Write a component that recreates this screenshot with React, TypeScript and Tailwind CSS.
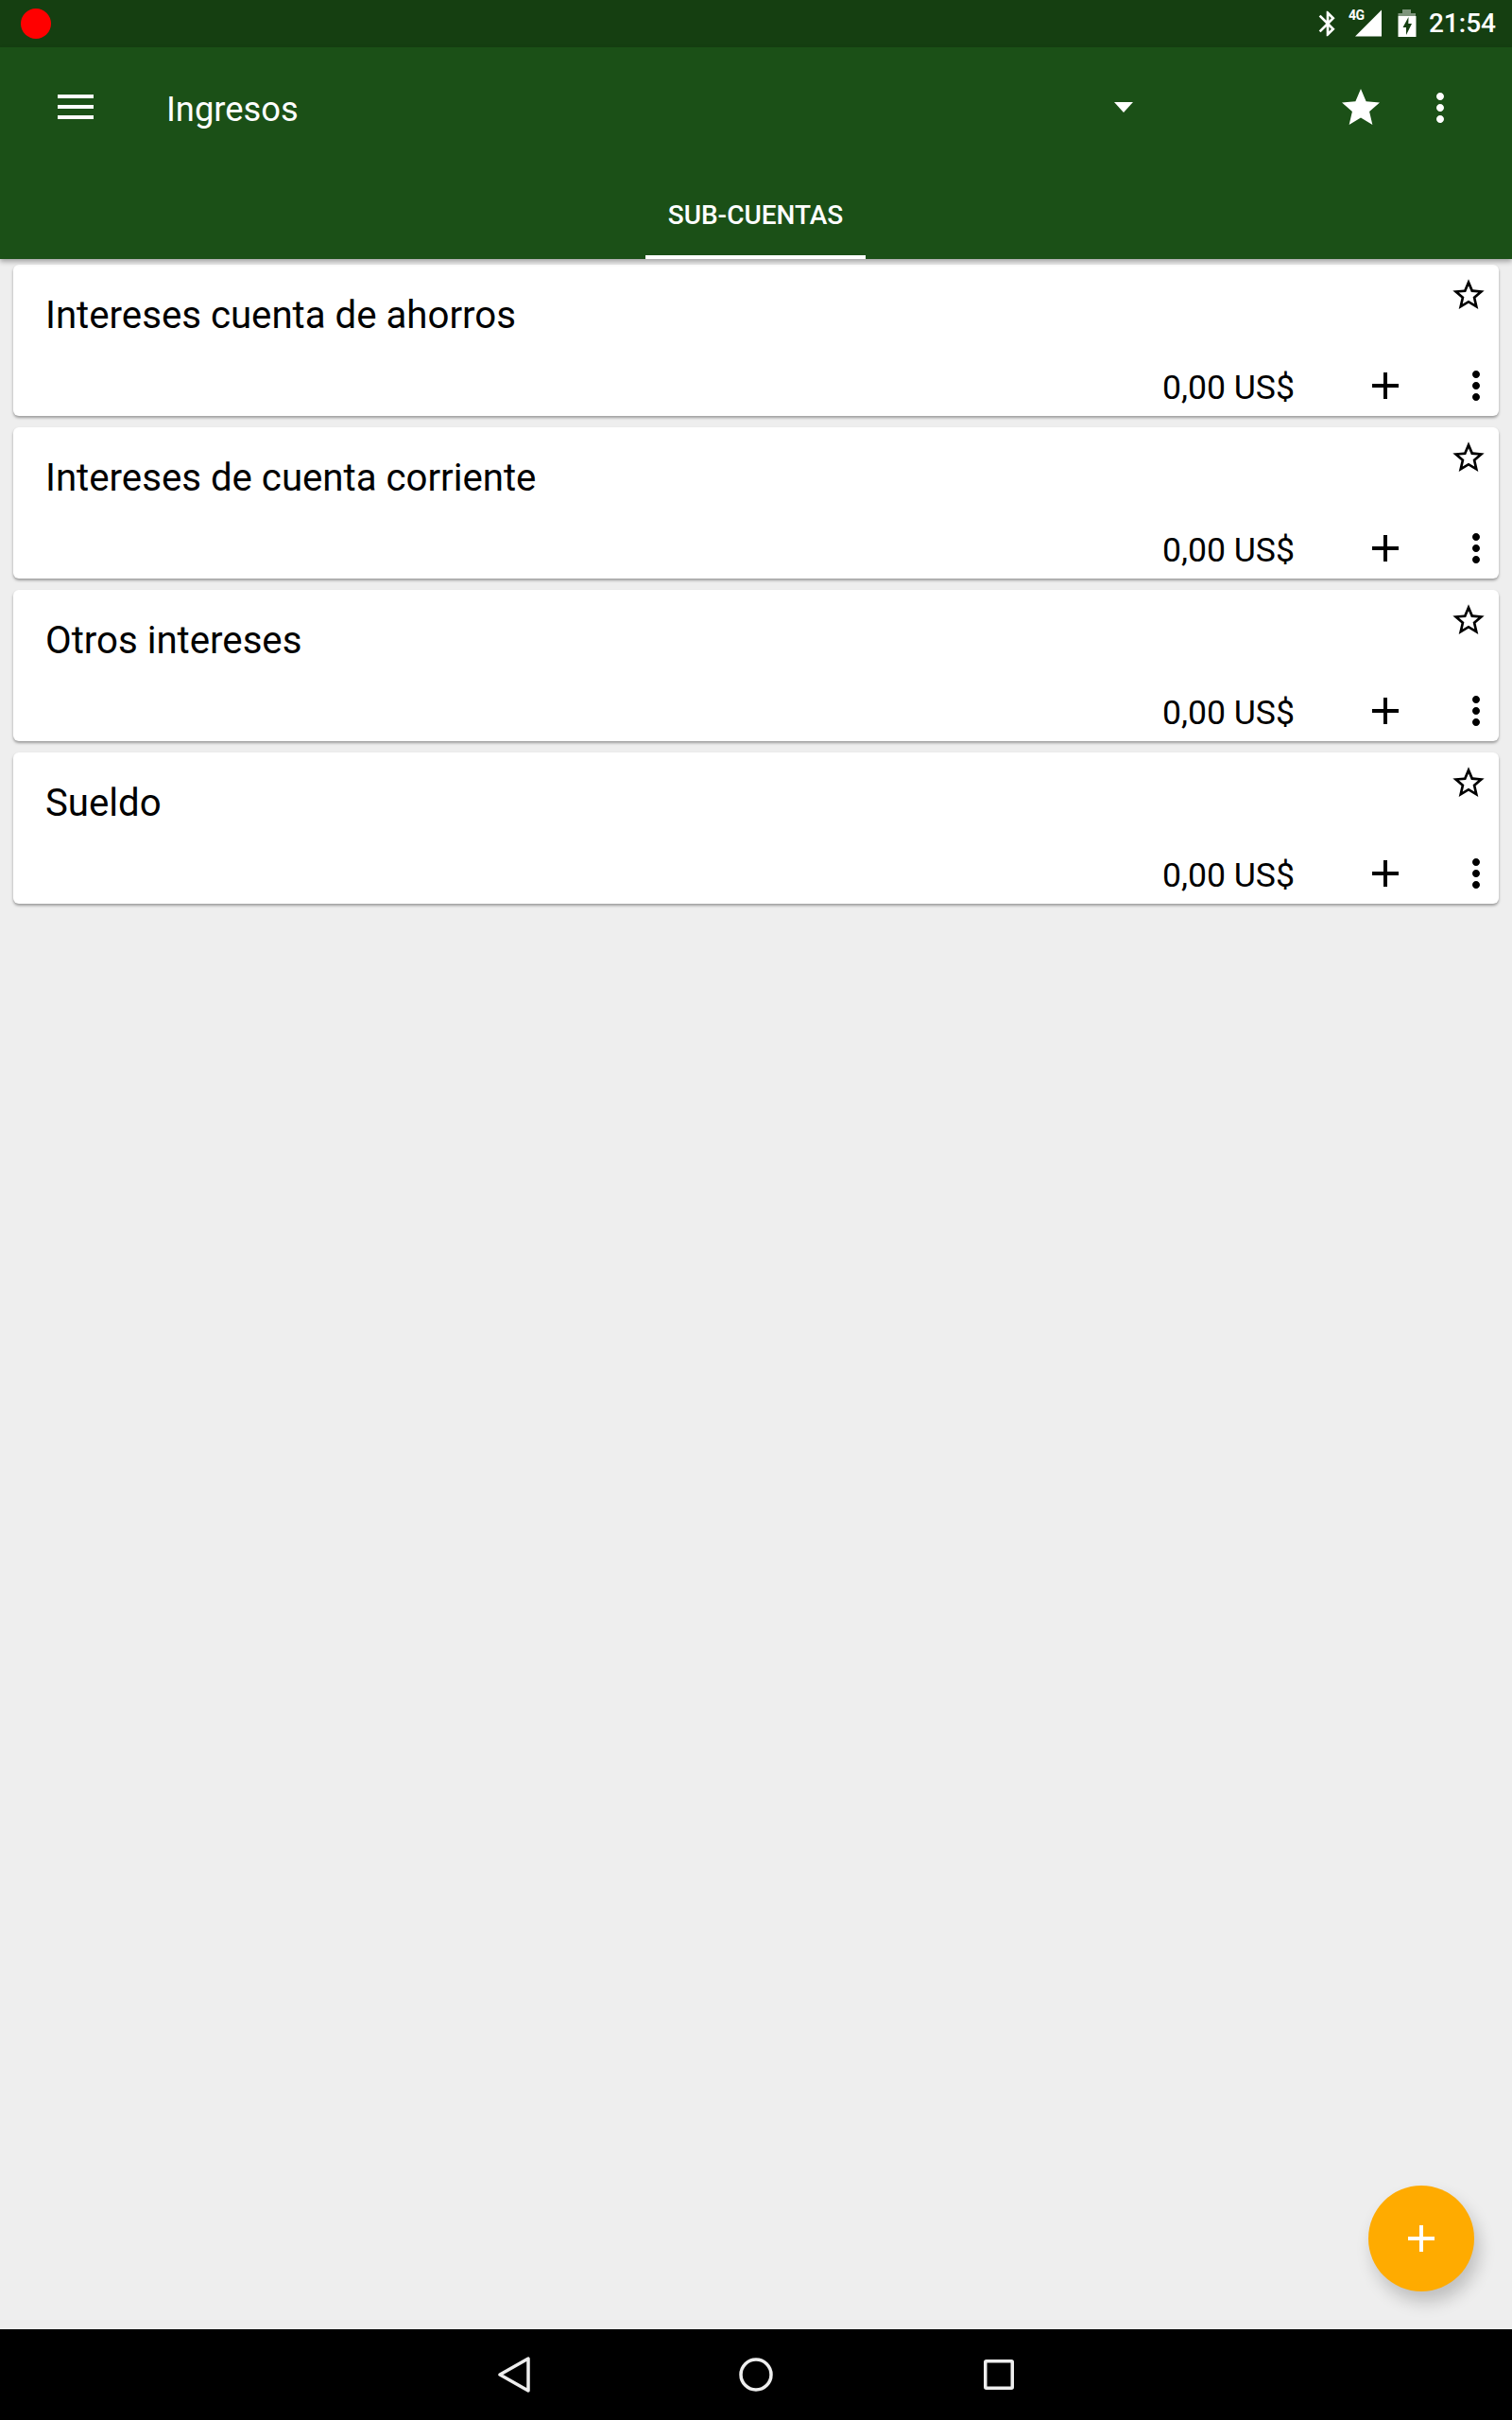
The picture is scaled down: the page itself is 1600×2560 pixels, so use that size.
import React from 'react';

const accounts = ['Intereses cuenta de ahorros', 'Intereses de cuenta corriente', 'Otros intereses', 'Sueldo'];

const MORE = 'M12 8c1.1 0 2-.9 2-2s-.9-2-2-2-2 .9-2 2 .9 2 2 2zm0 2c-1.1 0-2 .9-2 2s.9 2 2 2 2-.9 2-2-.9-2-2-2zm0 6c-1.1 0-2 .9-2 2s.9 2 2 2 2-.9 2-2-.9-2-2-2z';
const PLUS = 'M19 13h-6v6h-2v-6H5v-2h6V5h2v6h6v2z';
const STAR = 'M12 17.27L18.18 21l-1.64-7.03L22 9.24l-7.19-.61L12 2 9.19 8.63 2 9.24l5.46 4.73L5.82 21z';
const STAR_BORDER = 'M22 9.24l-7.19-.62L12 2 9.19 8.63 2 9.24l5.46 4.73L5.82 21 12 17.27 18.18 21l-1.63-7.03L22 9.24zM12 15.4l-3.76 2.27 1-4.28-3.32-2.88 4.38-.38L12 6.1l1.71 4.04 4.38.38-3.32 2.88 1 4.28L12 15.4z';
const BLUETOOTH = 'M17.71 7.71L12 2h-1v7.59L6.41 5 5 6.41 10.59 12 5 17.59 6.41 19 11 14.41V22h1l5.71-5.71-4.3-4.29 4.3-4.29zM13 5.83l1.88 1.88L13 9.59V5.83zm1.88 10.46L13 18.17v-3.76l1.88 1.88z';

function Icon({ d, className }: { d: string; className: string }) {
  return (
    <svg viewBox="0 0 24 24" className={className} fill="currentColor">
      <path d={d} />
    </svg>
  );
}

function StatusBar() {
  return (
    <div className="flex h-[50px] items-center bg-[#153f11] text-white">
      <div className="ml-[22px] h-[32px] w-[32px] rounded-full bg-[#ff0000]" />
      <div className="ml-auto flex items-center">
        <Icon d={BLUETOOTH} className="h-[32px] w-[32px]" />
        <div className="relative ml-[6px] h-[30px] w-[36px]">
          <span className="absolute left-0 top-[-1px] text-[14px] font-bold leading-[14px] tracking-[-0.5px]">4G</span>
          <svg viewBox="0 0 36 30" className="h-[30px] w-[36px]" fill="currentColor">
            <polygon points="7,28.5 35,0.5 35,28.5" />
          </svg>
        </div>
        <svg viewBox="0 0 20 30" className="ml-[16px] h-[30px] w-[20px]">
          <path d="M5 0h9v4h5v3H0.5V4H5z" fill="#ffffff" fillOpacity="0.45" />
          <path d="M0.5 7h19v22h-19z" fill="#ffffff" />
          <path d="M11.5 8 5.5 19h3.5v8l6-12h-3.7z" fill="#153f11" />
        </svg>
        <span className="ml-[13px] mr-[17px] text-[28px] font-medium leading-[50px]">21:54</span>
      </div>
    </div>
  );
}

function AppBar() {
  return (
    <div className="relative z-10 flex h-[224px] flex-col bg-[#1b5017] text-white shadow-[0_3px_5px_rgba(0,0,0,0.3)]">
      <div className="flex items-start pt-[40px]">
        <svg viewBox="0 0 48 48" className="ml-[56px] h-[48px] w-[48px]" fill="currentColor">
          <rect x="5" y="10" width="38" height="4" />
          <rect x="5" y="21" width="38" height="4" />
          <rect x="5" y="32" width="38" height="4" />
        </svg>
        <span className="ml-[72px] mt-[2px] text-[36.3px] leading-[48px]">Ingresos</span>
        <svg viewBox="0 0 20 11" className="ml-[863px] mt-[18px] h-[11px] w-[20px]" fill="currentColor">
          <polygon points="0,0 20,0 10,11" />
        </svg>
        <Icon d={STAR} className="ml-[217px] h-[48px] w-[48px]" />
        <Icon d={MORE} className="ml-[36px] h-[48px] w-[48px]" />
      </div>
      <div className="mt-auto flex justify-center">
        <div className="mr-[1px] flex h-[92px] w-[233px] items-center justify-center border-b-4 border-white pt-[4px]">
          <span className="text-[28px] font-medium leading-[32px]">SUB-CUENTAS</span>
        </div>
      </div>
    </div>
  );
}

function AccountCard({ name }: { name: string }) {
  return (
    <div className="flex h-[160px] flex-col rounded-[6px] bg-white text-black shadow-[0_2px_3px_rgba(0,0,0,0.35)]">
      <div className="flex items-start justify-between">
        <span className="ml-[34px] mt-[30px] text-[40.2px] leading-[48px]">{name}</span>
        <Icon d={STAR_BORDER} className="mr-[12px] mt-[12px] h-[40px] w-[40px]" />
      </div>
      <div className="mt-auto flex items-start justify-end pb-[8px]">
        <span className="mt-[6px] text-[35.6px] leading-[40px]">0,00 US$</span>
        <Icon d={PLUS} className="ml-[72px] h-[48px] w-[48px]" />
        <Icon d={MORE} className="ml-[48px] h-[48px] w-[48px]" />
      </div>
    </div>
  );
}

function NavBar() {
  return (
    <div className="flex h-[96px] items-center justify-center bg-black text-[#eeeeee]">
      <svg viewBox="0 0 34 38" className="h-[38px] w-[34px]" fill="none" stroke="currentColor" strokeWidth="3.5" strokeLinejoin="round">
        <polygon points="2,19 32,2 32,36" />
      </svg>
      <svg viewBox="0 0 36 36" className="ml-[221px] h-[36px] w-[36px]" fill="none" stroke="currentColor" strokeWidth="3.5">
        <circle cx="18" cy="18" r="16" />
      </svg>
      <svg viewBox="0 0 32 32" className="ml-[223px] h-[32px] w-[32px]" fill="none" stroke="currentColor" strokeWidth="3.5" strokeLinejoin="round">
        <rect x="1.75" y="1.75" width="28.5" height="28.5" rx="1" />
      </svg>
    </div>
  );
}

export default function App() {
  return (
    <div className="relative flex h-[2560px] w-[1600px] flex-col bg-[#eeeeee] font-['Roboto',sans-serif]">
      <StatusBar />
      <AppBar />
      <div className="flex flex-1 flex-col gap-[12px] px-[14px] pt-[6px]">
        {accounts.map((name) => (
          <AccountCard key={name} name={name} />
        ))}
      </div>
      <NavBar />
      <button className="absolute bottom-[136px] right-[40px] flex h-[112px] w-[112px] items-center justify-center rounded-full bg-[#ffab00] text-white shadow-[5px_11px_18px_rgba(0,0,0,0.2)]">
        <Icon d={PLUS} className="h-[48px] w-[48px]" />
      </button>
    </div>
  );
}
